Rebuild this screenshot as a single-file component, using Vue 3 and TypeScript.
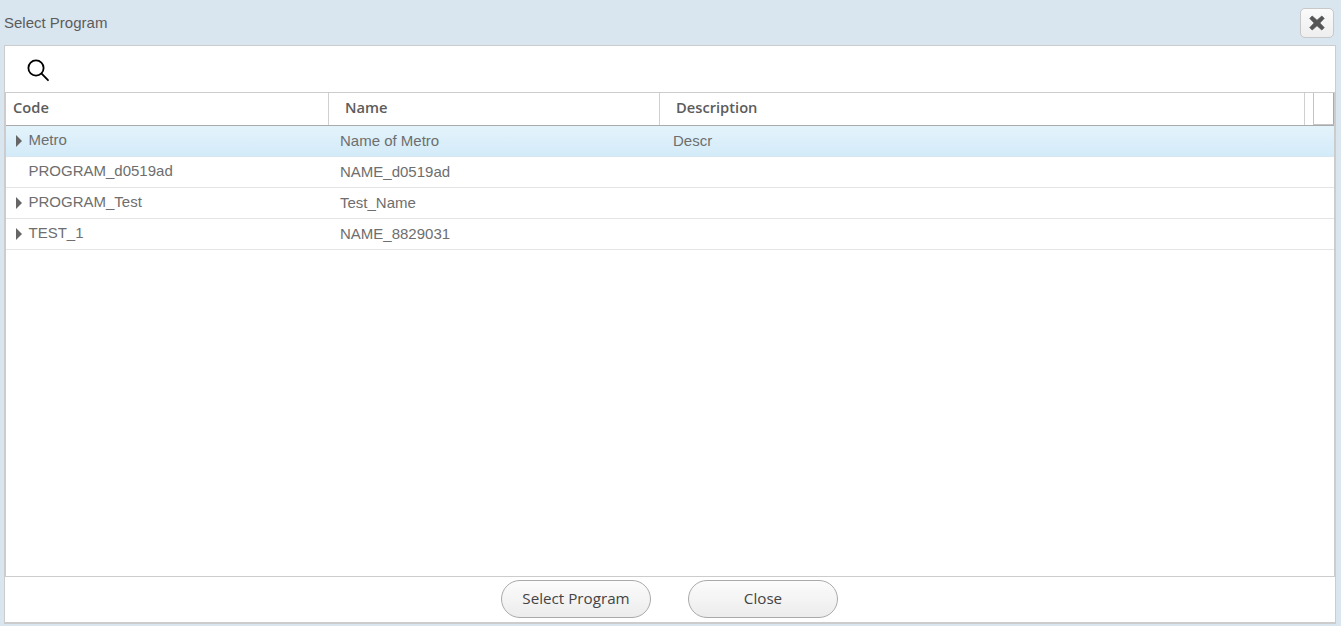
<script setup lang="ts">
interface Row {
  code: string
  name: string
  descr: string
  expandable: boolean
  selected?: boolean
}

const rows: Row[] = [
  { code: 'Metro', name: 'Name of Metro', descr: 'Descr', expandable: true, selected: true },
  { code: 'PROGRAM_d0519ad', name: 'NAME_d0519ad', descr: '', expandable: false },
  { code: 'PROGRAM_Test', name: 'Test_Name', descr: '', expandable: true },
  { code: 'TEST_1', name: 'NAME_8829031', descr: '', expandable: true }
]
</script>

<template>
  <div class="dialog">
    <header class="titlebar">
      <span class="title">Select Program</span>
      <button class="close-x" type="button" aria-label="Close">
        <svg width="16" height="16" viewBox="0 0 16 16">
          <path d="M3.2 1 8 5.3 12.8 1 15.2 3.4 10.8 8 15.2 12.6 12.8 15 8 10.7 3.2 15 .8 12.6 5.2 8 .8 3.4Z" fill="#555" stroke="#555" stroke-width=".8" stroke-linejoin="round" />
        </svg>
      </button>
    </header>
    <section class="panel">
      <div class="toolbar">
        <svg width="24" height="24" viewBox="0 0 24 24" fill="none" stroke="#000" stroke-width="1.8">
          <circle cx="10" cy="10" r="7.6" />
          <path d="M15.6 15.6 22 22.2" stroke-linecap="round" />
        </svg>
      </div>
      <div class="grid">
        <div class="head">
          <div class="hcell code">Code</div>
          <div class="hcell name">Name</div>
          <div class="hcell desc">Description</div>
          <div class="hspacer"></div>
          <div class="hbox"></div>
        </div>
        <div class="body">
          <div v-for="row in rows" :key="row.code" class="row" :class="{ selected: row.selected }">
            <div class="cell c1">
              <span class="arrow" :class="{ hidden: !row.expandable }"></span>
              <span class="code-text">{{ row.code }}</span>
            </div>
            <div class="cell c2">{{ row.name }}</div>
            <div class="cell c3">{{ row.descr }}</div>
          </div>
        </div>
      </div>
      <footer class="footer">
        <button class="btn" type="button">Select Program</button>
        <button class="btn" type="button">Close</button>
      </footer>
    </section>
  </div>
</template>

<style>
html, body { margin: 0; padding: 0; background: #d9e5ef; }
</style>

<style scoped>
.dialog {
  width: 1341px;
  height: 626px;
  box-sizing: border-box;
  background: #d9e5ef;
  display: flex;
  flex-direction: column;
  padding: 0 5px 2px 4px;
  font-family: "Liberation Sans", Arial, sans-serif;
  overflow: hidden;
}
.titlebar {
  height: 45px;
  flex: none;
  display: flex;
  align-items: center;
  justify-content: space-between;
}
.title {
  font-size: 15px;
  color: #5c5c5c;
}
.close-x {
  width: 34px;
  height: 30px;
  margin: 1px 2px 0 0;
  padding: 0;
  box-sizing: border-box;
  border: 1px solid #c8c8c8;
  border-radius: 5px;
  background: linear-gradient(#fbfbfb, #eeeeee);
  display: flex;
  align-items: center;
  justify-content: center;
}
.panel {
  flex: 1;
  min-height: 0;
  box-sizing: border-box;
  background: #fff;
  border: 1px solid #ccc;
  border-bottom-width: 2px;
  display: flex;
  flex-direction: column;
}
.toolbar {
  height: 46px;
  flex: none;
  box-sizing: border-box;
  padding: 12px 0 0 21px;
}
.toolbar svg { display: block; }
.grid {
  flex: 1;
  min-height: 0;
  display: flex;
  flex-direction: column;
  border-top: 1px solid #ccc;
  border-left: 1px solid #ccc;
  border-right: 1px solid #ccc;
}
.head {
  height: 33px;
  flex: none;
  box-sizing: border-box;
  display: flex;
  border-bottom: 1px solid #aaa;
  font-family: "Open Sans", sans-serif;
  font-weight: 600;
  font-size: 14.7px;
  color: #5c5c5c;
}
.hcell {
  box-sizing: border-box;
  line-height: 29px;
  border-right: 1px solid #d0d0d0;
}
.hcell.code { width: 323px; padding-left: 7px; }
.hcell.name { width: 331px; padding-left: 16px; }
.hcell.desc { width: 645px; padding-left: 16px; }
.hspacer { width: 8px; }
.hbox {
  flex: 1;
  border-left: 1px solid #c4c4c4;
  border-bottom: 1px solid #c4c4c4;
  border-right: 1px solid #aaa;
}
.body {
  flex: 1;
  min-height: 0;
}
.row {
  height: 31px;
  box-sizing: border-box;
  display: flex;
  border-bottom: 1px solid #e4e4e4;
  font-size: 15px;
  color: #6e6e6e;
}
.row.selected {
  background: linear-gradient(#e4f3fb, #d3ebf9);
  border-bottom-color: #d8e6ef;
}
.cell {
  box-sizing: border-box;
  line-height: 30px;
  white-space: nowrap;
}
.c1 {
  width: 323px;
  display: flex;
  align-items: center;
  padding-left: 10px;
}
.code-text { margin-left: 6.5px; position: relative; top: -1px; }
.arrow {
  width: 0;
  height: 0;
  border-style: solid;
  border-width: 6px 0 6px 6px;
  border-color: transparent transparent transparent #666;
}
.arrow.hidden { visibility: hidden; }
.c2 { width: 331px; padding-left: 11px; }
.c3 { flex: 1; padding-left: 13px; }
.footer {
  height: 46px;
  flex: none;
  box-sizing: border-box;
  border-top: 1px solid #ccc;
  display: flex;
  justify-content: center;
  gap: 37px;
  padding-top: 3px;
  padding-right: 1px;
}
.btn {
  width: 150px;
  height: 38px;
  box-sizing: border-box;
  border: 1px solid #aaa;
  border-radius: 19px;
  background: linear-gradient(#fcfcfc, #ececec);
  font-family: "Open Sans", sans-serif;
  font-size: 15.2px;
  color: #444;
  padding: 0 0 2px;
}
</style>
